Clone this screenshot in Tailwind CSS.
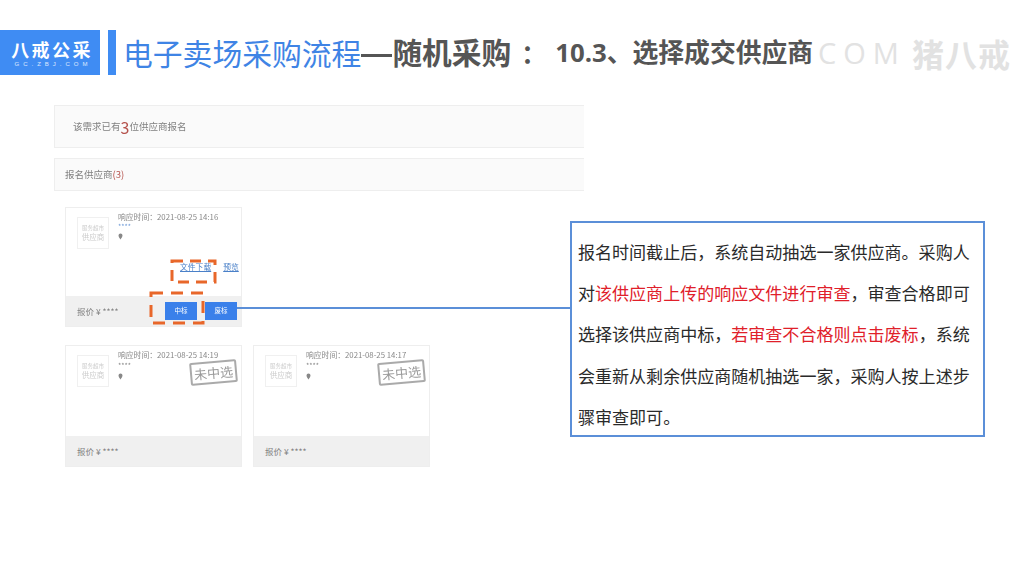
<!DOCTYPE html>
<html lang="zh-CN">
<head>
  <meta charset="UTF-8" />
  <meta name="viewport" content="width=device-width, initial-scale=1.0"/>
  <title>电子卖场采购流程</title>
  <script src="https://cdn.jsdelivr.net/npm/@tailwindcss/browser@4"></script>
</head>
<body class="bg-white font-['Noto_Sans_CJK_SC',sans-serif]">
<div class="relative w-[1024px] h-[576px] overflow-hidden bg-white">

  <!-- 标题栏 -->
  <header class="flex items-stretch h-[45px] absolute top-[30px] left-0 right-0">
    <div class="w-[100px] bg-[#3f8cf3] text-white flex flex-col items-center justify-center">
      <div class="text-[18px] leading-[20px] font-bold tracking-[2.4px] mt-[1px] ml-[4px]">八戒公采</div>
      <div class="text-[6px] leading-[8px] mt-[1px] ml-[6px] tracking-[4px] text-white/80 font-['Liberation_Sans',sans-serif]">GC.ZBJ.COM</div>
    </div>
    <div class="w-2 ml-2 bg-[#3f8cf3]"></div>
    <div class="ml-[7px] flex items-center whitespace-nowrap h-[45px] w-[691px]">
      <span class="text-[29.8px] text-[#3f84e5]">电子卖场采购流程</span>
      <span class="w-[31px] h-[3px] bg-[#555555] mt-[5px]"></span>
      <span class="text-[29.7px] font-bold text-[#555555]">随机采购</span>
      <span class="text-[25px] font-bold text-[#555555] ml-[10px] w-[34px]">：</span>
      <span class="text-[25.8px] font-bold text-[#555555] font-['Open_Sans','Noto_Sans_CJK_SC',sans-serif]">10.3、选择成交供应商</span>
    </div>
    <div class="flex items-center whitespace-nowrap text-[#e2e2e2] ml-[4px]">
      <span class="text-[29px] tracking-[7px] font-['Open_Sans',sans-serif]">COM</span>
      <span class="text-[32px] font-bold ml-[6px] tracking-[1px]">猪八戒</span>
    </div>
  </header>

  <!-- 截图区 -->
  <main class="absolute left-[54px] top-[105px] w-[530px] blur-[0.5px] text-[#808080]">
    <div class="h-[43px] bg-[#fafafa] border border-[#eeeeee] border-r-0 flex items-center pl-[18px] text-[9.5px]">
      <span>该需求已有</span><span class="text-[16px] leading-none text-[#b5524c]">3</span><span>位供应商报名</span>
    </div>
    <div class="mt-[10px] h-[33px] bg-[#fafafa] border border-[#eeeeee] border-r-0 flex items-center pl-[10px] text-[9.5px]">
      <span>报名供应商</span><span class="text-[#b5524c]">(3)</span>
    </div>

    <!-- 中标卡片 -->
    <div class="ml-[11px] mt-[16px] w-[177px] h-[120px] border border-[#eeeeee] flex flex-col">
      <div class="flex-1 flex pl-[11px] pt-[9px]">
        <div class="w-[32px] h-[32px] border border-[#f0f0f0] flex flex-col items-center justify-center text-[#cccccc] leading-none">
          <span class="text-[5.5px]">服务超市</span>
          <span class="text-[7.5px] mt-[1px]">供应商</span>
        </div>
        <div class="ml-[9px] -mt-[5px] text-[7.8px] leading-[10px] text-[#888888]">
          <div>响应时间：2021-08-25 14:16</div>
          <div class="text-[#6f9bd8] text-[7px] leading-[9px]">****</div>
          <svg class="mt-[2px]" width="5" height="7" viewBox="0 0 5 7"><path d="M2.5 0.5a2 2 0 0 1 2 2c0 1.4-2 4-2 4s-2-2.6-2-4a2 2 0 0 1 2-2z" fill="#888888"/></svg>
        </div>
      </div>
      <div class="absolute left-[126px] top-[158px] flex text-[7.8px] leading-none text-[#4a80c8] underline">
        <span>文件下载</span><span class="ml-[12px]">预览</span>
      </div>
      <div class="h-[30px] bg-[#f0f0f0] flex items-center pl-[11px] text-[8.5px] whitespace-nowrap">
        <span>报价 ¥ ****</span>
        <div class="ml-auto mr-[4px] flex gap-[8px]">
          <div class="w-[32px] h-[18px] bg-[#3a80ea] text-white text-[6.5px] flex items-center justify-center">中标</div>
          <div class="w-[32px] h-[18px] bg-[#3a80ea] text-white text-[6.5px] flex items-center justify-center">废标</div>
        </div>
      </div>
    </div>

    <!-- 未中选卡片 -->
    <div class="ml-[11px] mt-[18px] flex gap-[11px]">
      <div class="relative w-[177px] h-[122px] border border-[#eeeeee] flex flex-col">
        <div class="flex-1 flex pl-[11px] pt-[9px]">
          <div class="w-[32px] h-[32px] border border-[#f0f0f0] flex flex-col items-center justify-center text-[#cccccc] leading-none">
            <span class="text-[5.5px]">服务超市</span>
            <span class="text-[7.5px] mt-[1px]">供应商</span>
          </div>
          <div class="ml-[9px] -mt-[5px] text-[7.8px] leading-[10px] text-[#888888]">
            <div>响应时间：2021-08-25 14:19</div>
            <div class="text-[7px] leading-[10px]">****</div>
            <svg class="mt-[3px]" width="5" height="7" viewBox="0 0 5 7"><path d="M2.5 0.5a2 2 0 0 1 2 2c0 1.4-2 4-2 4s-2-2.6-2-4a2 2 0 0 1 2-2z" fill="#888888"/></svg>
          </div>
        </div>
        <div class="absolute left-[124px] top-[15px] w-[47px] h-[23px] border-2 border-[#aaaaaa] rounded-[2px] -rotate-[5deg] text-[#999999] text-[13px] leading-none flex items-center justify-center whitespace-nowrap">未中选</div>
        <div class="h-[30px] bg-[#f0f0f0] flex items-center pl-[11px] text-[8.5px]">报价 ¥ ****</div>
      </div>
      <div class="relative w-[177px] h-[122px] border border-[#eeeeee] flex flex-col">
        <div class="flex-1 flex pl-[11px] pt-[9px]">
          <div class="w-[32px] h-[32px] border border-[#f0f0f0] flex flex-col items-center justify-center text-[#cccccc] leading-none">
            <span class="text-[5.5px]">服务超市</span>
            <span class="text-[7.5px] mt-[1px]">供应商</span>
          </div>
          <div class="ml-[9px] -mt-[5px] text-[7.8px] leading-[10px] text-[#888888]">
            <div>响应时间：2021-08-25 14:17</div>
            <div class="text-[7px] leading-[10px]">****</div>
            <svg class="mt-[3px]" width="5" height="7" viewBox="0 0 5 7"><path d="M2.5 0.5a2 2 0 0 1 2 2c0 1.4-2 4-2 4s-2-2.6-2-4a2 2 0 0 1 2-2z" fill="#888888"/></svg>
          </div>
        </div>
        <div class="absolute left-[124px] top-[15px] w-[47px] h-[23px] border-2 border-[#aaaaaa] rounded-[2px] -rotate-[5deg] text-[#999999] text-[13px] leading-none flex items-center justify-center whitespace-nowrap">未中选</div>
        <div class="h-[30px] bg-[#f0f0f0] flex items-center pl-[11px] text-[8.5px]">报价 ¥ ****</div>
      </div>
    </div>
  </main>

  <!-- 橙色虚线框与连接线 -->
  <svg class="absolute left-0 top-0 pointer-events-none" width="1024" height="576" viewBox="0 0 1024 576" fill="none">
    <rect x="172" y="261" width="43" height="21" stroke="#e8672a" stroke-width="3" stroke-dasharray="11 7"/>
    <rect x="151" y="293" width="52" height="30" stroke="#e8672a" stroke-width="3" stroke-dasharray="12 8"/>
    <line x1="237" y1="308" x2="570" y2="308" stroke="#5b8fd8" stroke-width="2"/>
  </svg>

  <!-- 说明框 -->
  <aside class="absolute left-[570px] top-[221px] w-[415px] h-[216px] border-2 border-[#5b8fd8] bg-white pl-[6px] pt-[8px] text-[17.05px] leading-[41.2px] text-[#2a2a2a] whitespace-nowrap">
    <p>报名时间截止后，系统自动抽选一家供应商。采购人</p>
    <p>对<span class="text-[#e0202a]">该供应商上传的响应文件进行审查</span>，审查合格即可</p>
    <p>选择该供应商中标，<span class="text-[#e0202a]">若审查不合格则点击废标</span>，系统</p>
    <p>会重新从剩余供应商随机抽选一家，采购人按上述步</p>
    <p>骤审查即可。</p>
  </aside>
</div>
</body>
</html>
